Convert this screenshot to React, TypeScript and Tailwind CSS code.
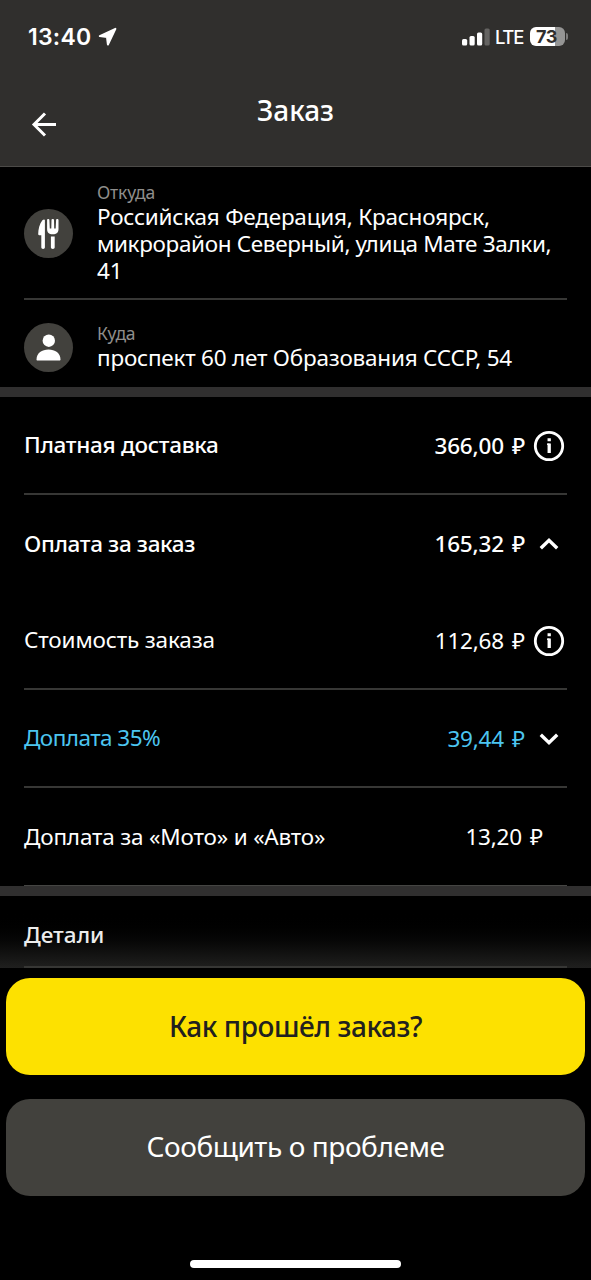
import type { ReactNode } from "react";
import clsx from "clsx";

type RowIcon = "info" | "up" | "down";

type PriceRow = {
  title: string;
  amount: string;
  icon?: RowIcon;
  bold?: boolean;
  accent?: boolean;
  divider?: boolean;
  titleClass: string;
  height: string;
};

const rows: PriceRow[] = [
  {
    title: "Платная доставка",
    amount: "366,00",
    icon: "info",
    bold: true,
    divider: true,
    titleClass: "tracking-[-0.300px]",
    height: "h-[98px]",
  },
  {
    title: "Оплата за заказ",
    amount: "165,32",
    icon: "up",
    bold: true,
    titleClass: "tracking-[-0.350px]",
    height: "h-[97px]",
  },
  {
    title: "Стоимость заказа",
    amount: "112,68",
    icon: "info",
    divider: true,
    titleClass: "tracking-[-0.150px]",
    height: "h-[98px]",
  },
  {
    title: "Доплата 35%",
    amount: "39,44",
    icon: "down",
    accent: true,
    divider: true,
    titleClass: "tracking-[-0.550px]",
    height: "h-[98px]",
  },
  {
    title: "Доплата за «Мото» и «Авто»",
    amount: "13,20",
    titleClass: "tracking-[-0.180px]",
    height: "h-[97px]",
  },
];

function StatusBar() {
  return (
    <div className="flex h-[73px] items-center justify-between pr-[23px] pl-7 font-['Inter',sans-serif]">
      <div className="flex items-center gap-[7px] pt-px">
        <span className="text-[23px] leading-none font-semibold tracking-[0.250px]">13:40</span>
        <svg width="20" height="20" viewBox="0 0 20 20" fill="currentColor">
          <path
            d="M17.400 1.800L1.800 9.100 9 10.100l.9 7.400z"
            stroke="currentColor"
            strokeWidth="2"
            strokeLinejoin="round"
          />
        </svg>
      </div>
      <div className="flex items-center">
        <svg width="28" height="18" viewBox="0 0 28 18" fill="currentColor">
          <rect x="0" y="11" width="5.200" height="6.500" rx="1.500" />
          <rect x="7.500" y="8" width="5.200" height="9.500" rx="1.500" />
          <rect x="15" y="4.500" width="5.200" height="13" rx="1.500" />
          <rect x="22.500" y="0.500" width="5.200" height="17" rx="1.500" opacity="0.250" />
        </svg>
        <span className="mt-px ml-[5px] text-[18.500px] leading-none font-medium tracking-[-1.300px]">LTE</span>
        <div className="ml-[7px] flex h-[19px] w-[35px] items-center justify-start rounded-[6px] bg-linear-to-r from-white from-[72%] to-[#959594] to-[72%] pl-[6px]">
          <span className="text-[18px] leading-none font-bold tracking-[-0.300px] text-[#302f2d]">73</span>
        </div>
        <div className="ml-px h-[7px] w-[2px] rounded-r-full bg-[#7d7c7b]" />
      </div>
    </div>
  );
}

function Header() {
  return (
    <header className="h-[167px] border-b border-[#4c4b48] bg-[#302f2d]">
      <StatusBar />
      <div className="grid grid-cols-[72px_1fr_72px] items-start">
        <button className="mt-[38px] ml-[31px] size-[27px]">
          <svg width="27" height="27" viewBox="0 0 27 27" fill="none" stroke="currentColor" strokeWidth="3">
            <path d="M25 13.500H3M14 2.500l-11 11 11 11" />
          </svg>
        </button>
        <h1 className="mt-[18px] text-center text-[28px] leading-[38px] font-medium">Заказ</h1>
      </div>
    </header>
  );
}

function ForkKnifeIcon() {
  return (
    <svg width="23" height="32" viewBox="0 0 23 32" fill="currentColor">
      <path d="M7.900 2.300v27c0 1.100-.8 1.700-1.800 1.700s-1.800-.6-1.800-1.700V17.200H2.200c-.7 0-1-.5-1-1.200 0-4.500 1.300-10.300 4.200-13.700 1-1.200 2.500-1.200 2.500 0z" />
      <path d="M10.100 1.900c0-1.300 2.200-1.300 2.300 0l.4 8.600h1.500l.2-8.600c0-1.300 2.500-1.300 2.500 0l.2 8.600h1.500l.4-8.600c.1-1.300 2.300-1.300 2.400 0v9c0 3.400-1.900 5.300-5.800 5.300s-5.600-1.900-5.600-5.300z" />
      <path d="M13.900 18.400h3.800V29.300c0 1.100-.8 1.700-1.900 1.700s-1.900-.6-1.900-1.700z" />
    </svg>
  );
}

function PersonIcon() {
  return (
    <svg width="25" height="27" viewBox="0 0 25 27" fill="currentColor">
      <circle cx="12.800" cy="6.700" r="6.200" />
      <path d="M.5 25.500c0-6.500 5.500-10 12-10s12 3.500 12 10c0 .7-.4 1-1 1H1.500c-.6 0-1-.3-1-1z" />
    </svg>
  );
}

function Address({ icon, label, children }: { icon: ReactNode; label: string; children: ReactNode }) {
  return (
    <div className="flex items-center gap-6">
      <div className="flex size-[49px] shrink-0 items-center justify-center rounded-full bg-[#42413d]">{icon}</div>
      <div className="pb-[2px]">
        <div className="text-[17.500px] leading-[22px] tracking-[-0.200px] text-[#8f8e8c]">{label}</div>
        <div className="text-[22.500px] leading-[27px] tracking-[-0.220px] whitespace-nowrap">{children}</div>
      </div>
    </div>
  );
}

function Trailing({ icon }: { icon?: RowIcon }) {
  if (icon === "info") {
    return (
      <svg width="32" height="32" viewBox="0 0 32 32" fill="none" stroke="currentColor">
        <circle cx="16" cy="16" r="13.700" strokeWidth="2.800" />
        <path d="M16.200 8.200v3M16.200 13.500v9.500" strokeWidth="3.300" />
        <path d="M14 14.200h2.500" strokeWidth="1.400" />
      </svg>
    );
  }
  return (
    <svg
      width="32"
      height="32"
      viewBox="0 0 32 32"
      fill="none"
      stroke="currentColor"
      strokeWidth="3.400"
      className={clsx(icon === "down" && "rotate-180")}
    >
      <path d="M7.800 20.300l8.200-8 8.200 8" />
    </svg>
  );
}

function Row({ row }: { row: PriceRow }) {
  return (
    <div
      className={clsx(
        "flex items-center justify-between text-[22.500px] leading-[30px]",
        row.height,
        row.bold && "font-medium",
        row.divider && "border-b-2 border-[#373735]",
      )}
    >
      <span className={clsx(row.titleClass, row.accent && "text-[#4cc5f0]")}>{row.title}</span>
      <div className={clsx("flex items-center gap-2 pt-px", row.icon ? "pr-[2px]" : "pr-6")}>
        <span className={clsx("tracking-[-0.200px] [word-spacing:2.500px]", row.accent && "text-[#4cc5f0]")}>
          {row.amount} ₽
        </span>
        {row.icon && <Trailing icon={row.icon} />}
      </div>
    </div>
  );
}

export default function App() {
  return (
    <div className="flex h-[1280px] w-[591px] flex-col overflow-hidden bg-black font-['Noto_Sans',sans-serif] text-white">
      <Header />

      <section className="px-6">
        <div className="flex h-[133px] items-center border-b-2 border-[#373735] pt-[2px]">
          <Address icon={<ForkKnifeIcon />} label="Откуда">
            Российская Федерация, Красноярск,
            <br />
            <span className="tracking-[-0.340px]">микрорайон Северный, улица Мате Залки,</span>
            <br />
            41
          </Address>
        </div>
        <div className="flex h-[87px] items-center pt-2">
          <Address icon={<PersonIcon />} label="Куда">
            проспект 60 лет Образования СССР, 54
          </Address>
        </div>
      </section>

      <div className="h-[10px] bg-[#302f2f]" />

      <section className="px-6">
        {rows.map((row) => (
          <Row key={row.title} row={row} />
        ))}
        <div className="h-px bg-[#454543]" />
      </section>

      <div className="h-[10px] bg-[#302f2f]" />

      <section className="flex h-[72px] flex-col bg-linear-to-b from-black from-20% to-[#20201f] px-6">
        <h2 className="flex h-full items-center pt-2 text-[22.500px] font-medium text-[#ececec]">Детали</h2>
        <div className="h-[2px] shrink-0 bg-[#373735]" />
      </section>

      <div className="flex flex-col gap-6 px-[6px] pt-[10px]">
        <button className="h-[97px] rounded-[24px] bg-[#fde100] pb-[2px] text-[28px] font-medium tracking-[-0.420px] text-[#21201f]">
          Как прошёл заказ?
        </button>
        <button className="h-[97px] rounded-[24px] bg-[#42413d] pb-[3px] text-[28px] tracking-[-0.420px]">
          Сообщить о проблеме
        </button>
      </div>

      <div className="mt-auto mb-3 h-2 w-[211px] self-center rounded-full bg-white" />
    </div>
  );
}
